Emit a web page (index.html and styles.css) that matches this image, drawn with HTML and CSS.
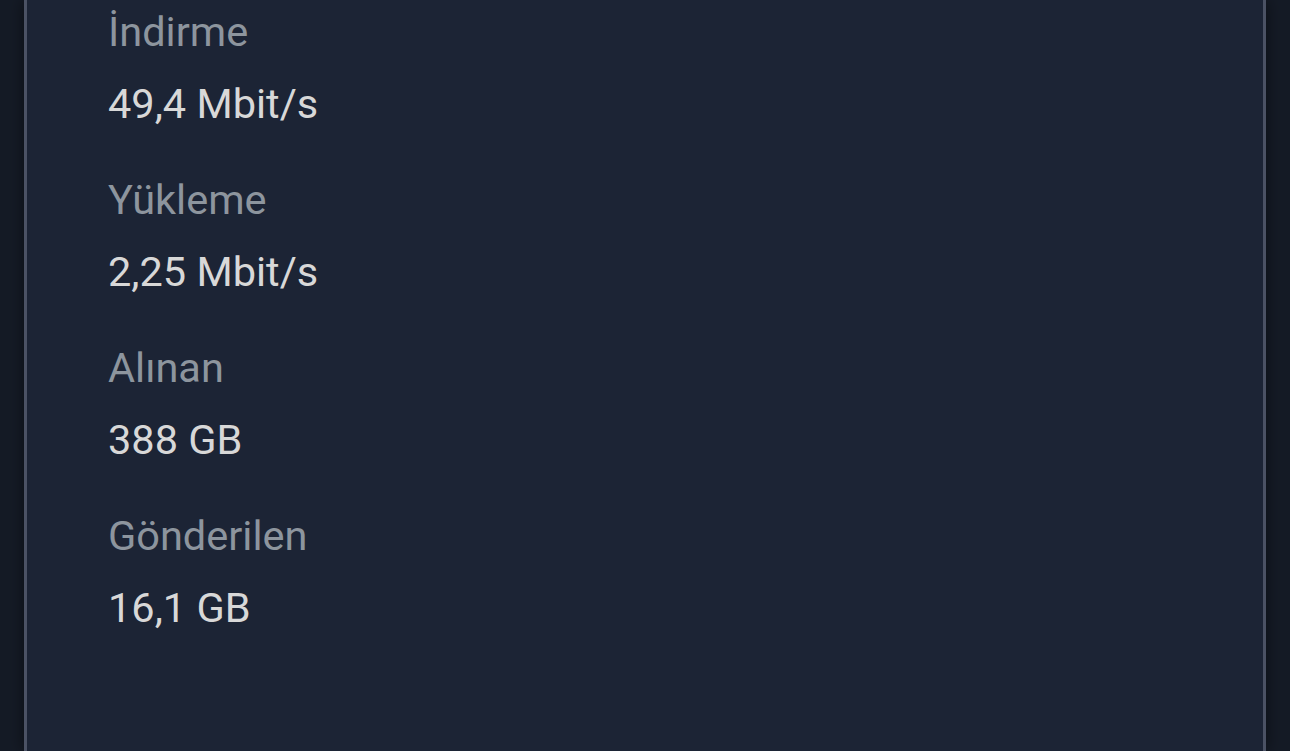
FILE: index.html
```html
<!DOCTYPE html>
<html lang="tr">
<head>
  <meta charset="UTF-8">
  <meta name="viewport" content="width=device-width, initial-scale=1.0">
  <title>Ağ Ayrıntıları</title>
  <link rel="stylesheet" href="styles.css">
</head>
<body>

  <!-- Network details panel -->
  <div class="panel">
    <dl class="stats">
      <div class="stat">
        <dt>İndirme</dt>
        <dd>49,4 Mbit/s</dd>
      </div>
      <div class="stat">
        <dt>Yükleme</dt>
        <dd>2,25 Mbit/s</dd>
      </div>
      <div class="stat">
        <dt>Alınan</dt>
        <dd>388 GB</dd>
      </div>
      <div class="stat">
        <dt>Gönderilen</dt>
        <dd>16,1 GB</dd>
      </div>
    </dl>
  </div>

</body>
</html>
```

FILE: styles.css
```css
html, body {
  height: 100%;
}
body {
  margin: 0;
  padding: 0 24px;
  background-color: #151b26;
  font-family: Roboto, "Noto Sans", sans-serif;
  overflow: hidden;
}
.panel {
  box-sizing: border-box;
  min-height: 100%;
  background-color: #1c2435;
  border-left: 3px solid #4b5264;
  border-right: 3px solid #4b5264;
  box-shadow: 0 0 16px rgba(0, 0, 0, 0.5);
  padding: 8px 81px;
}
.stats {
  margin: 0;
  display: flex;
  flex-direction: column;
  gap: 48px;
}
.stat {
  display: flex;
  flex-direction: column;
  gap: 24px;
}
dt, dd {
  margin: 0;
  font-size: 41.5px;
  line-height: 48px;
}
dt {
  color: #8d959e;
}
dd {
  color: #d8d8d8;
}
```
